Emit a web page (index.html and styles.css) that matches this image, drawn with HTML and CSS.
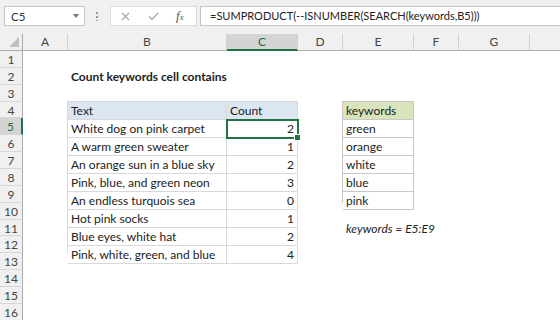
FILE: index.html
```html
<!DOCTYPE html>
<html lang="en">
<head>
    <meta charset="UTF-8">
    <title>Count keywords cell contains</title>
    <link rel="stylesheet" href="styles.css">
</head>
<body>
    <div class="toolbar">
        <div class="namebox">
            <span>C5</span>
            <span class="caret"></span>
        </div>
        <div class="grip"></div>
        <div class="fbuttons">
            <svg class="icon-x" width="9" height="9" viewBox="0 0 9 9"><path d="M1 1 L8 8 M8 1 L1 8" stroke="#a6a6a6" stroke-width="1.2" fill="none"/></svg>
            <svg class="icon-check" width="11" height="9" viewBox="0 0 11 9"><path d="M1 4.5 L4 7.5 L10 1" stroke="#a6a6a6" stroke-width="1.2" fill="none"/></svg>
            <span class="fx">f<small>x</small></span>
        </div>
        <div class="formula">=SUMPRODUCT(--ISNUMBER(SEARCH(keywords,B5)))</div>
    </div>

    <div class="sheet">
        <!-- column headers -->
        <div class="ch corner"><span class="tri"></span></div>
        <div class="ch">A</div>
        <div class="ch">B</div>
        <div class="ch sel">C</div>
        <div class="ch">D</div>
        <div class="ch">E</div>
        <div class="ch">F</div>
        <div class="ch">G</div>
        <div class="ch last"></div>

        <!-- row headers -->
        <div class="rh">1</div>
        <div class="rh">2</div>
        <div class="rh">3</div>
        <div class="rh">4</div>
        <div class="rh sel">5</div>
        <div class="rh">6</div>
        <div class="rh">7</div>
        <div class="rh">8</div>
        <div class="rh">9</div>
        <div class="rh">10</div>
        <div class="rh">11</div>
        <div class="rh">12</div>
        <div class="rh">13</div>
        <div class="rh">14</div>
        <div class="rh">15</div>
        <div class="rh">16</div>

        <div class="title">Count keywords cell contains</div>

        <div class="data">
            <div class="cell head">Text</div>
            <div class="cell head">Count</div>
            <div class="cell">White dog on pink carpet</div>
            <div class="cell num active">2</div>
            <div class="cell">A warm green sweater</div>
            <div class="cell num">1</div>
            <div class="cell">An orange sun in a blue sky</div>
            <div class="cell num">2</div>
            <div class="cell">Pink, blue, and green neon</div>
            <div class="cell num">3</div>
            <div class="cell">An endless turquois sea</div>
            <div class="cell num">0</div>
            <div class="cell">Hot pink socks</div>
            <div class="cell num">1</div>
            <div class="cell">Blue eyes, white hat</div>
            <div class="cell num">2</div>
            <div class="cell">Pink, white, green, and blue</div>
            <div class="cell num">4</div>
        </div>

        <div class="keywords">
            <div class="cell head">keywords</div>
            <div class="cell">green</div>
            <div class="cell">orange</div>
            <div class="cell">white</div>
            <div class="cell">blue</div>
            <div class="cell">pink</div>
        </div>

        <div class="note">keywords = E5:E9</div>
    </div>
</body>
</html>
```

FILE: styles.css
```css
/* Base */
body {
    margin: 0;
    width: 560px;
    height: 320px;
    overflow: hidden;
    background: #ffffff;
    font-family: Lato, 'Open Sans', sans-serif;
    font-size: 12px;
    color: #222;
}

/* Formula bar */
.toolbar {
    height: 34px;
    box-sizing: border-box;
    padding-top: 6px;
    display: flex;
    align-items: flex-start;
    background: #f0f0f0;
}

.namebox {
    margin-left: 4px;
    width: 81px;
    height: 20px;
    box-sizing: border-box;
    padding: 0 5px 0 6px;
    display: flex;
    align-items: center;
    justify-content: space-between;
    background: #ffffff;
    border: 1px solid #c6c6c6;
    font-size: 11.5px;
    color: #333;
}

.caret {
    width: 0;
    height: 0;
    border-top: 4px solid #777;
    border-left: 3.5px solid transparent;
    border-right: 3.5px solid transparent;
}

.grip {
    width: 2px;
    height: 10px;
    margin: 5px 12px 0 11px;
    background: radial-gradient(circle, #9a9a9a 0.8px, transparent 1px) 0 0 / 2px 4px;
}

.fbuttons {
    width: 87px;
    height: 20px;
    box-sizing: border-box;
    display: flex;
    align-items: center;
    background: #ffffff;
    border: 1px solid #dcdcdc;
}

.icon-x { margin-left: 10px; }
.icon-check { margin-left: 18px; }

.fx {
    margin-left: 17px;
    font-family: 'Liberation Serif', serif;
    font-style: italic;
    font-size: 13px;
    color: #555;
}

.fx small { font-size: 9px; }

.formula {
    margin-left: 3px;
    flex: 1;
    height: 20px;
    box-sizing: border-box;
    padding-left: 9px;
    background: #ffffff;
    border: 1px solid #c6c6c6;
    border-right: none;
    font-size: 11px;
    line-height: 18px;
    color: #222;
    white-space: nowrap;
}

/* Sheet grid */
.sheet {
    display: grid;
    grid-template-columns: 23px 45px 159px 71px 45px 71px 45px 71px 1fr;
    grid-template-rows: 17px repeat(16, 16.87px);
}

.ch {
    box-sizing: border-box;
    background: #f0f0f0;
    border-right: 1px solid #d0d0d0;
    border-bottom: 1px solid #ababab;
    text-align: center;
    font-size: 12px;
    line-height: 16px;
    color: #444;
}

.ch.last { border-right: none; }

.ch.sel {
    background: #d4d4d4;
    color: #1e6b40;
    border-bottom: 2px solid #217346;
}

.corner {
    position: relative;
    border-right-color: #ababab;
}

.corner .tri {
    position: absolute;
    right: 3px;
    bottom: 3px;
    width: 0;
    height: 0;
    border-left: 10px solid transparent;
    border-bottom: 10px solid #c0c0c0;
}

.rh {
    grid-column: 1;
    box-sizing: border-box;
    background: #f0f0f0;
    border-right: 1px solid #ababab;
    border-bottom: 1px solid #d6d6d6;
    text-align: center;
    font-size: 12px;
    line-height: 17px;
    color: #444;
}

.rh.sel {
    background: #d4d4d4;
    color: #1e6b40;
    border-right: 2px solid #217346;
}

/* Cells */
.cell {
    box-sizing: border-box;
    padding: 0 3px;
    line-height: 17px;
    white-space: nowrap;
}

.num { text-align: right; }

.title {
    grid-column: 3 / 5;
    grid-row: 3;
    padding-left: 3px;
    font-weight: 700;
    line-height: 18px;
}

/* Data table B4:C12 */
.data {
    grid-column: 3 / 5;
    grid-row: 5 / 14;
    display: grid;
    grid-template-columns: 159px 71px;
    grid-template-rows: repeat(9, 1fr);
    margin-top: -1px;
    margin-left: -1px;
    border-top: 1px solid #d9d9d9;
    border-left: 1px solid #d9d9d9;
}

.data .cell {
    border-right: 1px solid #d9d9d9;
    border-bottom: 1px solid #d9d9d9;
}

.data .head { background: #dce6f1; }

.active {
    position: relative;
    outline: 2px solid #217346;
    outline-offset: -1px;
}

.active::after {
    content: "";
    position: absolute;
    right: -4px;
    bottom: -4px;
    width: 5px;
    height: 5px;
    background: #217346;
    border: 1px solid #ffffff;
}

/* Keywords range E4:E9 */
.keywords {
    grid-column: 6;
    grid-row: 5 / 11;
    display: grid;
    grid-template-rows: repeat(6, 1fr);
    margin-top: -1px;
    margin-left: -1px;
    border-top: 1px solid #c8c8c8;
    border-left: 1px solid #c8c8c8;
}

.keywords .cell {
    border-right: 1px solid #c8c8c8;
    border-bottom: 1px solid #c8c8c8;
}

.keywords .head { background: #d8e4bc; }

.note {
    grid-column: 6 / 9;
    grid-row: 12;
    padding-left: 3px;
    font-style: italic;
    line-height: 18px;
}
```
